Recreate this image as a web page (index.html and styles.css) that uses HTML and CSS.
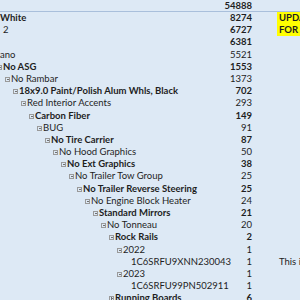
FILE: index.html
```html
<!DOCTYPE html>
<html>
<head>
<meta charset="utf-8">
<link rel="stylesheet" href="styles.css">
</head>
<body>
<div class="sheet">
  <div class="row head"><div class="label"></div><div class="num b">54888</div><div class="note"></div></div>
  <div class="row"><div class="label x0 b">White</div><div class="num b">8274</div><div class="note hl">UPDATED</div></div>
  <div class="row"><div class="label x3">2</div><div class="num b">6727</div><div class="note hl">FOR MY</div></div>
  <div class="row"><div class="label"></div><div class="num b">6381</div><div class="note"></div></div>
  <div class="row"><div class="label x0">ano</div><div class="num">5521</div><div class="note"></div></div>
  <div class="row"><div class="label l0 b"><span class="tg"></span>No ASG</div><div class="num b">1553</div><div class="note"></div></div>
  <div class="row"><div class="label l1"><span class="tg"></span>No Rambar</div><div class="num">1373</div><div class="note"></div></div>
  <div class="row"><div class="label l2 b"><span class="tg"></span>18x9.0 Paint/Polish Alum Whls, Black</div><div class="num b">702</div><div class="note"></div></div>
  <div class="row"><div class="label l3"><span class="tg"></span>Red Interior Accents</div><div class="num">293</div><div class="note"></div></div>
  <div class="row"><div class="label l4 b"><span class="tg"></span>Carbon Fiber</div><div class="num b">149</div><div class="note"></div></div>
  <div class="row"><div class="label l5"><span class="tg"></span>BUG</div><div class="num">91</div><div class="note"></div></div>
  <div class="row"><div class="label l6 b"><span class="tg"></span>No Tire Carrier</div><div class="num b">87</div><div class="note"></div></div>
  <div class="row"><div class="label l7"><span class="tg"></span>No Hood Graphics</div><div class="num">50</div><div class="note"></div></div>
  <div class="row"><div class="label l8 b"><span class="tg"></span>No Ext Graphics</div><div class="num b">38</div><div class="note"></div></div>
  <div class="row"><div class="label l9"><span class="tg"></span>No Trailer Tow Group</div><div class="num">25</div><div class="note"></div></div>
  <div class="row"><div class="label l10 b"><span class="tg"></span>No Trailer Reverse Steering</div><div class="num b">25</div><div class="note"></div></div>
  <div class="row"><div class="label l11"><span class="tg"></span>No Engine Block Heater</div><div class="num">24</div><div class="note"></div></div>
  <div class="row"><div class="label l12 b"><span class="tg"></span>Standard Mirrors</div><div class="num b">21</div><div class="note"></div></div>
  <div class="row"><div class="label l13"><span class="tg"></span>No Tonneau</div><div class="num">20</div><div class="note"></div></div>
  <div class="row"><div class="label l14 b"><span class="tg"></span>Rock Rails</div><div class="num b">2</div><div class="note"></div></div>
  <div class="row"><div class="label l15"><span class="tg"></span>2022</div><div class="num">1</div><div class="note"></div></div>
  <div class="row"><div class="label leaf">1C6SRFU9XNN230043</div><div class="num">1</div><div class="note">This is</div></div>
  <div class="row"><div class="label l15"><span class="tg"></span>2023</div><div class="num">1</div><div class="note"></div></div>
  <div class="row"><div class="label leaf">1C6SRFU99PN502911</div><div class="num">1</div><div class="note"></div></div>
  <div class="row"><div class="label l14 b"><span class="tg plus"></span>Running Boards</div><div class="num b">6</div><div class="note"></div></div>
</div>
</body>
</html>
```
FILE: styles.css
```css
html, body {
  margin: 0;
  padding: 0;
  background: #dde9f5;
  overflow: hidden;
}
.sheet {
  width: 300px;
  height: 300px;
  overflow: hidden;
  font-family: Lato, "Liberation Sans", sans-serif;
  font-size: 9.5px;
  color: #1e1e1e;
}
.row {
  display: flex;
  height: 12.2px;
  line-height: 12.2px;
  white-space: nowrap;
}
.row.head {
  height: 11px;
  line-height: 11px;
  border-bottom: 1px solid #a9bfdb;
}
.label {
  flex: 1;
  overflow: visible;
  min-width: 0;
}
.num {
  width: 40px;
  text-align: right;
  padding-right: 25px;
}
.note {
  width: 23px;
  padding-left: 2px;
  overflow: hidden;
  flex: none;
  box-sizing: border-box;
}
.note.hl {
  background: #ffff00;
  font-weight: 700;
}
.b { font-weight: 700; }
.tg {
  display: inline-block;
  width: 5px;
  height: 5px;
  border: 1px solid #9a9a9a;
  box-sizing: border-box;
  margin-right: 1px;
  position: relative;
  vertical-align: 0;
}
.tg::after {
  content: "";
  position: absolute;
  left: 0.5px;
  right: 0.5px;
  top: 1px;
  height: 1px;
  background: #707070;
}
.tg.plus::before {
  content: "";
  position: absolute;
  top: 0;
  bottom: 0;
  left: 1px;
  width: 1px;
  background: #707070;
}
.x0 { padding-left: 0; }
.x3 { padding-left: 3px; }
.l0 { margin-left: -3px; }
.l1 { padding-left: 5px; }
.l2 { padding-left: 13px; }
.l3 { padding-left: 21px; }
.l4 { padding-left: 29px; }
.l5 { padding-left: 37px; }
.l6 { padding-left: 45px; }
.l7 { padding-left: 53px; }
.l8 { padding-left: 61px; }
.l9 { padding-left: 69px; }
.l10 { padding-left: 77px; }
.l11 { padding-left: 85px; }
.l12 { padding-left: 93px; }
.l13 { padding-left: 101px; }
.l14 { padding-left: 109px; }
.l15 { padding-left: 117px; }
.leaf { padding-left: 131px; }
```
